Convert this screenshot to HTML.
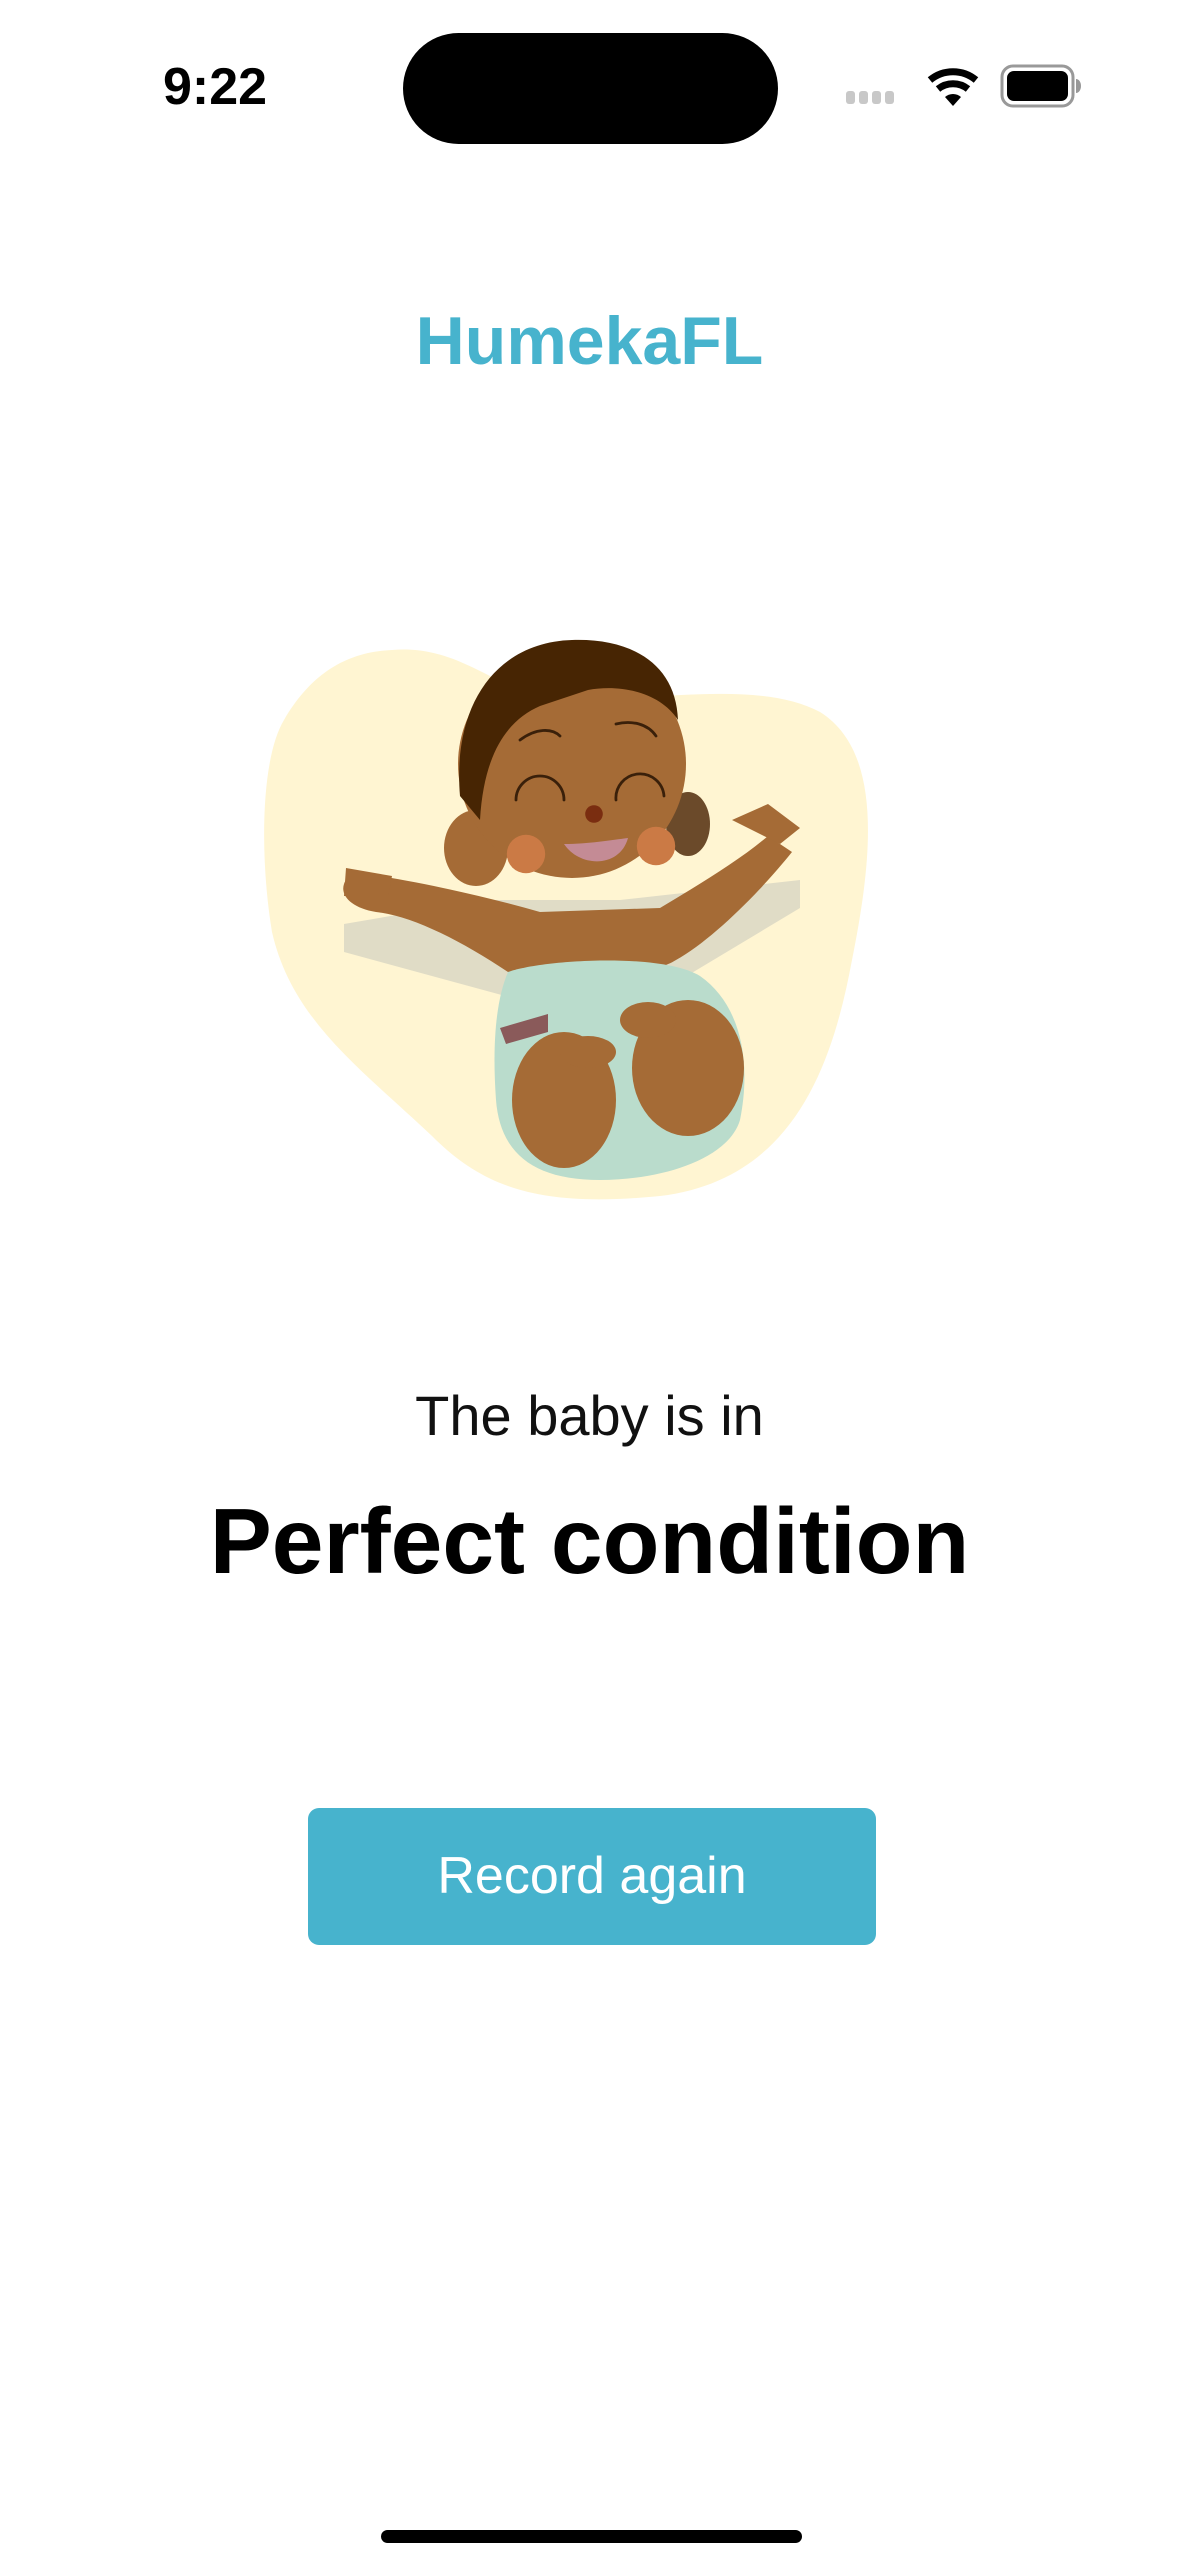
<!DOCTYPE html>
<html><head><meta charset="utf-8"><style>
html,body{margin:0;padding:0;background:#fff;}
body{width:1179px;height:2556px;position:relative;overflow:hidden;font-family:"Liberation Sans",sans-serif;}
.abs{position:absolute;}
</style></head><body>
<div class="abs" style="left:150px;top:55px;width:130px;text-align:center;font-size:52px;font-weight:bold;line-height:64px;color:#000;">9:22</div>
<div class="abs" style="left:403px;top:33px;width:375px;height:111px;border-radius:56px;background:#000;"></div>
<svg class="abs" style="left:838px;top:54px" width="260" height="60" viewBox="0 0 260 60">
 <g fill="#c8c8c8"><rect x="8" y="37" width="9" height="13" rx="3"/><rect x="21" y="37" width="9" height="13" rx="3"/><rect x="34" y="37" width="9" height="13" rx="3"/><rect x="47" y="37" width="9" height="13" rx="3"/></g>
 <g fill="none" stroke="#000" stroke-width="7" stroke-linecap="butt">
  <path d="M92 26 A36 36 0 0 1 138 26"/><path d="M100 35 A24 24 0 0 1 130 35"/>
 </g>
 <path d="M107 43 L115 52 L123 43 A12 12 0 0 0 107 43Z" fill="#000"/>
 <rect x="164" y="12" width="71" height="40" rx="11" fill="none" stroke="#999" stroke-width="3"/>
 <rect x="169" y="17" width="61" height="30" rx="7" fill="#000"/>
 <path d="M238 25 a5 7 0 0 1 0 14z" fill="#999"/>
</svg>
<div class="abs" style="left:0;top:298px;width:1179px;text-align:center;font-size:68px;font-weight:bold;color:#47b3cd;line-height:86px;">HumekaFL</div>
<svg class="abs" style="left:260px;top:620px" width="620" height="590" viewBox="0 0 1550 1475">
 <path d="M330 75 C520 60 600 200 780 200 C1000 200 1250 150 1400 230 C1560 330 1530 600 1480 850 C1430 1120 1330 1400 1000 1440 C700 1470 560 1420 430 1290 C250 1120 80 1000 30 780 C0 600 0 350 60 250 C130 130 220 80 330 75Z" fill="#fff5d2"/>
 <path d="M210 760 L560 700 L900 700 L1350 650 L1350 720 L1050 900 L650 950 L210 830Z" fill="#e0dcc6"/>
 <path d="M300 640 C420 660 560 690 700 730 L1000 720 C1100 660 1200 600 1270 540 L1330 580 C1250 680 1130 800 1040 850 C960 900 700 920 620 880 C500 800 380 740 290 730 C230 720 200 690 210 660 C220 630 260 630 300 640Z" fill="#a56b36"/>
 <path d="M215 620 L330 640 L320 690 L210 690Z M1180 500 L1270 460 L1350 520 L1300 560Z" fill="#a56b36"/>
 <ellipse cx="540" cy="570" rx="80" ry="95" fill="#a56b36"/>
 <ellipse cx="1070" cy="510" rx="55" ry="80" fill="#6b4a2a"/>
 <circle cx="780" cy="360" r="285" fill="#a56b36"/>
 <path d="M500 440 C480 200 600 55 780 50 C930 45 1040 110 1045 250 C1000 180 900 160 820 175 L700 215 C620 250 560 330 550 500Z" fill="#472503"/>
 <circle cx="665" cy="585" r="48" fill="#cb7a45"/><circle cx="990" cy="565" r="48" fill="#cb7a45"/>
 <g fill="none" stroke="#3a200a" stroke-width="7" stroke-linecap="round">
  <path d="M640 450 A60 60 0 0 1 760 450"/><path d="M890 450 A60 60 0 0 1 1010 440"/>
  <path d="M650 300 C690 270 730 270 750 290"/><path d="M890 260 C930 250 970 260 990 290"/>
  <path d="M660 1220 C720 1300 800 1300 850 1280"/><path d="M990 1230 C1050 1220 1110 1180 1160 1100"/>
 </g>
 <path d="M760 560 C820 560 880 550 920 545 C900 620 800 620 760 560Z" fill="#c48b95"/>
 <circle cx="835" cy="485" r="22" fill="#7a2d10"/>
 <path d="M620 880 C700 850 1000 830 1100 890 C1200 960 1230 1100 1200 1250 C1170 1350 1000 1400 850 1400 C680 1400 600 1330 590 1200 C580 1060 590 950 620 880Z" fill="#badccc"/>
 <path d="M600 1020 L720 985 L720 1030 L615 1060Z" fill="#8a5a5a"/>
 <ellipse cx="760" cy="1200" rx="130" ry="170" fill="#a56b36"/>
 <ellipse cx="1070" cy="1120" rx="140" ry="170" fill="#a56b36"/>
 <ellipse cx="820" cy="1080" rx="70" ry="40" fill="#a56b36"/>
 <ellipse cx="970" cy="1000" rx="70" ry="45" fill="#a56b36"/>
</svg>
<div class="abs" style="left:0;top:1380px;width:1179px;text-align:center;font-size:56px;color:#111;line-height:72px;">The baby is in</div>
<div class="abs" style="left:0;top:1484px;width:1179px;text-align:center;font-size:93px;font-weight:bold;color:#000;line-height:114px;">Perfect condition</div>
<div class="abs" style="left:308px;top:1808px;width:568px;height:137px;border-radius:11px;background:#47b3cd;color:#fff;font-size:52px;line-height:137px;text-align:center;">Record again</div>
<div class="abs" style="left:381px;top:2530px;width:421px;height:13px;border-radius:7px;background:#000;"></div>
</body></html>
